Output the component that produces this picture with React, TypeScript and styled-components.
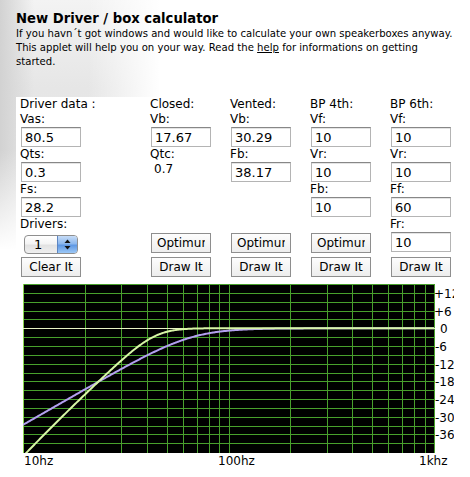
import React from 'react'
import styled, { createGlobalStyle } from 'styled-components'

const GlobalStyle = createGlobalStyle`
  html, body {
    margin: 0;
    padding: 0;
    background: #fff;
  }
  body {
    font-family: "DejaVu Sans", Verdana, sans-serif;
    color: #000;
  }
`

// speaker data used for the response curves
const driver = { vas: 80.5, qts: 0.3, fs: 28.2 }
const closed = { vb: 17.67, qtc: 0.7 }
const vented = { vb: 30.29, fb: 38.17, ql: 7 }

const PLOT_W = 411
const PLOT_H = 169
const DECADE = 205.5
const ROW = 8.85
const PX_PER_DB = ROW / 3

const xOf = (f: number) => DECADE * Math.log10(f / 10)
const yOf = (db: number) => (15 - db) * PX_PER_DB

const closedDb = (f: number) => {
  const fc = (driver.fs * closed.qtc) / driver.qts
  const r = f / fc
  const mag = (r * r) / Math.sqrt((1 - r * r) ** 2 + (r / closed.qtc) ** 2)
  return 20 * Math.log10(mag)
}

const ventedDb = (f: number) => {
  const h = vented.fb / driver.fs
  const alpha = driver.vas / vented.vb
  const qt = driver.qts
  const ql = vented.ql
  const a1 = (ql + h * qt) / (Math.sqrt(h) * ql * qt)
  const a2 = (h + (alpha + 1 + h * h) * qt * ql) / (h * qt * ql)
  const a3 = (h * ql + qt) / (Math.sqrt(h) * qt * ql)
  const w = f / Math.sqrt(driver.fs * vented.fb)
  const re = w ** 4 - a2 * w * w + 1
  const im = a3 * w - a1 * w ** 3
  return 20 * Math.log10(w ** 4 / Math.sqrt(re * re + im * im))
}

const curvePath = (fn: (f: number) => number) => {
  let d = ''
  for (let x = 0; x <= PLOT_W; x += 1) {
    const f = 10 * Math.pow(10, x / DECADE)
    const y = Math.min(Math.max(yOf(fn(f)), -20), PLOT_H + 40)
    d += `${x === 0 ? 'M' : 'L'}${x} ${y.toFixed(2)} `
  }
  return d
}

const freqLines = [
  20, 30, 40, 50, 60, 70, 80, 90, 100, 200, 300, 400, 500, 600, 700, 800, 900,
]
const dbLabels = [12, 6, 0, -6, -12, -18, -24, -30, -36]

const Page = styled.div`
  width: 470px;
  height: 477px;
  box-sizing: border-box;
  padding: 11px 0 0 16px;
  overflow: hidden;
  background-image:
    linear-gradient(to right, rgba(255, 255, 255, 0) 55%, #fff 100%),
    linear-gradient(to bottom, rgba(255, 255, 255, 0) 60%, #fff 100%),
    linear-gradient(to right, #d2d2d2 0, rgba(220, 220, 220, 0) 34px),
    linear-gradient(to bottom, #f3f3f3 0, #e6e6e6 35%, #e9e9e9 75%, #f6f6f6 100%);
  background-size: 160px 250px;
  background-repeat: no-repeat;
`

const Title = styled.h1`
  margin: 0;
  font-size: 13.2px;
  line-height: 16px;
  font-weight: bold;
`

const Intro = styled.p`
  margin: 0;
  width: 440px;
  font-size: 10.1px;
  line-height: 14px;
`

const HelpLink = styled.a`
  color: inherit;
  text-decoration: underline;
`

const Applet = styled.div`
  margin-top: 28px;
  width: 438px;
  height: 380px;
  background: #fff;
  overflow: hidden;
  font-size: 12px;
`

const Form = styled.div`
  display: grid;
  grid-template-columns: 130px repeat(4, 80px);
  height: 180px;
  padding-left: 4px;
`

const Column = styled.div`
  display: flex;
  flex-direction: column;
  align-items: flex-start;
  min-width: 0;
`

const Label = styled.div`
  height: 15px;
  line-height: 15px;
  white-space: nowrap;
`

const Value = styled(Label)`
  padding-left: 4px;
`

const Field = styled.input`
  width: 60px;
  height: 20px;
  box-sizing: border-box;
  margin: 0 0 0 1px;
  padding: 0 3px;
  border: 1px solid #b4b4b4;
  border-top-color: #878787;
  box-shadow: inset 0 1px 0 #e4e4e4;
  background: #fff;
  font-family: "DejaVu Sans", Verdana, sans-serif;
  font-size: 13px;
  color: #000;
  outline: none;
`

const Actions = styled.div<{ $gap: number }>`
  margin-top: auto;
  display: flex;
  flex-direction: column;
  gap: ${(p) => p.$gap}px;
`

const Button = styled.button`
  display: block;
  width: 60px;
  height: 20px;
  box-sizing: border-box;
  margin: 0 0 0 1px;
  padding: 0 5px;
  border: 1px solid #8e8e8e;
  border-radius: 0;
  background: linear-gradient(#fdfdfd, #ededed);
  font-family: "DejaVu Sans", Verdana, sans-serif;
  font-size: 12px;
  color: #000;
`

const ButtonText = styled.span`
  display: block;
  overflow: hidden;
  white-space: nowrap;
  text-align: center;
  line-height: 18px;
`

const Popup = styled.div`
  display: flex;
  width: 54px;
  height: 19px;
  box-sizing: border-box;
  margin: 3px 0 0 4px;
  border: 1px solid #8f8f8f;
  border-radius: 4px;
  background: linear-gradient(#ffffff 0, #f4f4f4 45%, #e2e2e2 55%, #f0f0f0 100%);
  overflow: hidden;
`

const PopupValue = styled.span`
  flex: 1;
  padding-left: 9px;
  font-size: 13px;
  line-height: 17px;
`

const Stepper = styled.span`
  display: flex;
  align-items: center;
  justify-content: center;
  width: 19px;
  border-left: 1px solid #5e86c2;
  background: linear-gradient(#c6dcf7 0, #8db8ee 45%, #5f98e4 55%, #9cc8f6 100%);
`

const Chart = styled.svg`
  display: block;
  margin: 7px 0 0 7px;
  font-family: "DejaVu Sans", Verdana, sans-serif;
  font-size: 12px;
`

const Graph = () => (
  <Chart width={440} height={193} viewBox="0 0 440 193">
    <defs>
      <clipPath id="plot">
        <rect x={0} y={0} width={PLOT_W + 1} height={PLOT_H} />
      </clipPath>
    </defs>
    <rect x={0} y={0} width={PLOT_W + 1} height={PLOT_H} fill="#000" />
    <g stroke="#48a02c" strokeWidth={1} shapeRendering="crispEdges">
      {Array.from({ length: 19 }, (_, k) =>
        k === 5 ? null : (
          <line key={k} x1={0} x2={PLOT_W + 1} y1={Math.round(k * ROW) + 0.5} y2={Math.round(k * ROW) + 0.5} />
        )
      )}
      {freqLines.map((f) => (
        <line key={f} x1={Math.round(xOf(f)) + 0.5} x2={Math.round(xOf(f)) + 0.5} y1={0} y2={PLOT_H} />
      ))}
      <line x1={PLOT_W + 0.5} x2={PLOT_W + 0.5} y1={0} y2={PLOT_H} />
      <line x1={0.5} x2={0.5} y1={0} y2={PLOT_H} stroke="#8ad24e" />
    </g>
    <line
      x1={0}
      x2={PLOT_W + 1}
      y1={Math.round(5 * ROW) + 0.5}
      y2={Math.round(5 * ROW) + 0.5}
      stroke="#e8f3c6"
      shapeRendering="crispEdges"
    />
    <g clipPath="url(#plot)" fill="none" strokeWidth={2} strokeLinejoin="round">
      <path d={curvePath(closedDb)} stroke="#b3a0f0" />
      <path d={curvePath(ventedDb)} stroke="#d8f6a6" />
    </g>
    {dbLabels.map((db) => (
      <text key={db} x={db === 0 ? 417 : db > 0 ? 411 : 412} y={yOf(db) + 5} fill="#000">
        {db > 0 ? `+${db}` : `${db}`}
      </text>
    ))}
    <text x={1} y={180.5}>10hz</text>
    <text x={195} y={180.5}>100hz</text>
    <text x={396} y={180.5}>1khz</text>
  </Chart>
)

const StepperArrows = () => (
  <svg width="7" height="11" viewBox="0 0 7 11">
    <path d="M3.5 0.5 L6.5 4 L0.5 4 Z" fill="#111" />
    <path d="M3.5 10.5 L6.5 7 L0.5 7 Z" fill="#111" />
  </svg>
)

const Input = ({ value }: { value: string }) => <Field defaultValue={value} />

const Action = ({ children }: { children: string }) => (
  <Button>
    <ButtonText>{children}</ButtonText>
  </Button>
)

export default function App() {
  return (
    <>
      <GlobalStyle />
      <Page>
        <Title>New Driver / box calculator</Title>
        <Intro>
          If you havn´t got windows and would like to calculate your own speakerboxes anyway. This
          applet will help you on your way. Read the <HelpLink href="#">help</HelpLink> for
          informations on getting started.
        </Intro>
        <Applet>
          <Form>
            <Column>
              <Label>Driver data :</Label>
              <Label>Vas:</Label>
              <Input value="80.5" />
              <Label>Qts:</Label>
              <Input value="0.3" />
              <Label>Fs:</Label>
              <Input value="28.2" />
              <Label>Drivers:</Label>
              <Popup>
                <PopupValue>1</PopupValue>
                <Stepper>
                  <StepperArrows />
                </Stepper>
              </Popup>
              <Actions $gap={4}>
                <Action>Clear It</Action>
              </Actions>
            </Column>
            <Column>
              <Label>Closed:</Label>
              <Label>Vb:</Label>
              <Input value="17.67" />
              <Label>Qtc:</Label>
              <Value>0.7</Value>
              <Actions $gap={4}>
                <Action>Optimum</Action>
                <Action>Draw It</Action>
              </Actions>
            </Column>
            <Column>
              <Label>Vented:</Label>
              <Label>Vb:</Label>
              <Input value="30.29" />
              <Label>Fb:</Label>
              <Input value="38.17" />
              <Actions $gap={4}>
                <Action>Optimum</Action>
                <Action>Draw It</Action>
              </Actions>
            </Column>
            <Column>
              <Label>BP 4th:</Label>
              <Label>Vf:</Label>
              <Input value="10" />
              <Label>Vr:</Label>
              <Input value="10" />
              <Label>Fb:</Label>
              <Input value="10" />
              <Actions $gap={4}>
                <Action>Optimum</Action>
                <Action>Draw It</Action>
              </Actions>
            </Column>
            <Column>
              <Label>BP 6th:</Label>
              <Label>Vf:</Label>
              <Input value="10" />
              <Label>Vr:</Label>
              <Input value="10" />
              <Label>Ff:</Label>
              <Input value="60" />
              <Label>Fr:</Label>
              <Input value="10" />
              <Actions $gap={4}>
                <Action>Draw It</Action>
              </Actions>
            </Column>
          </Form>
          <Graph />
        </Applet>
      </Page>
    </>
  )
}
